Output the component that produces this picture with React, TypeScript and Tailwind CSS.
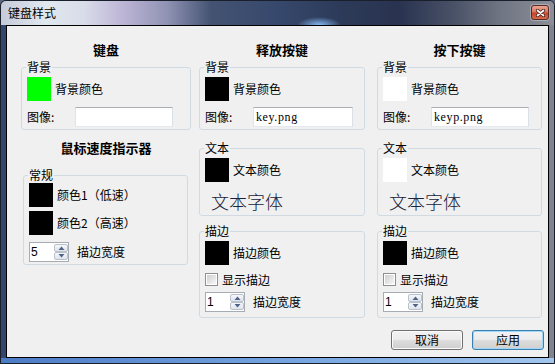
import React from "react";

function Group({
  title,
  className,
  children,
}: {
  title: string;
  className: string;
  children: React.ReactNode;
}) {
  return (
    <fieldset
      className={
        "border border-[#d0dae2] rounded-[3px] pl-[4px] pr-[4px] min-w-0 " +
        className
      }
    >
      <legend className="px-[1px] text-[12px] leading-[14px] text-black">{title}</legend>
      <div className="pl-[1px]">{children}</div>
    </fieldset>
  );
}

function ColorRow({
  swatch,
  label,
  className,
}: {
  swatch: string;
  label: string;
  className: string;
}) {
  return (
    <div className={"flex items-center h-[24px] " + className}>
      <div className={"w-[24px] h-[24px] shrink-0 " + swatch} />
      <span className="ml-[4px] text-[12px] leading-[14px] text-black whitespace-nowrap">{label}</span>
    </div>
  );
}

function ImageRow({ value, inputW }: { value: string; inputW: string }) {
  return (
    <div className="flex items-center h-[20px] mt-[6px]">
      <span className="w-[48px] shrink-0 text-[12px] leading-[14px] text-black">图像:</span>
      <div
        className={
          "h-[20px] bg-white border border-t-[#abadb3] border-l-[#e2e3ea] border-r-[#dbdfe6] border-b-[#e3e9ef] pl-[2px] flex items-center " +
          inputW
        }
      >
        <span className="font-['Liberation_Serif',serif] text-[12px] leading-[14px] tracking-[0.6px] text-black">
          {value}
        </span>
      </div>
    </div>
  );
}

function Spin({ v }: { v: string }) {
  return (
    <div className="flex w-[40px] h-[20px] shrink-0 border border-[#a7acb4] bg-white">
      <div className="flex-1 pl-[1px] text-[12px] leading-[18px] font-['Liberation_Sans',sans-serif] text-black">
        {v}
      </div>
      <div className="w-[14px] flex flex-col py-[1px]">
        <div className="flex-1 flex items-center justify-center border border-[#b9c1cc] rounded-[2px] bg-[linear-gradient(#f5f7fa,#dfe4ec)]">
          <svg width="7" height="4" viewBox="0 0 7 4">
            <path d="M0.5 4 L3.5 0.5 L6.5 4Z" fill="#4d6286" />
          </svg>
        </div>
        <div className="flex-1 flex items-center justify-center border border-[#b9c1cc] rounded-[2px] bg-[linear-gradient(#f5f7fa,#dfe4ec)]">
          <svg width="7" height="4" viewBox="0 0 7 4">
            <path d="M0.5 0 L3.5 3.5 L6.5 0Z" fill="#4d6286" />
          </svg>
        </div>
      </div>
    </div>
  );
}

function SpinRow({ v, className }: { v: string; className: string }) {
  return (
    <div className={"flex items-center h-[20px] " + className}>
      <Spin v={v} />
      <span className="ml-[8px] text-[12px] leading-[14px] text-black whitespace-nowrap">描边宽度</span>
    </div>
  );
}

function CheckRow() {
  return (
    <div className="flex items-center h-[13px] mt-[8px]">
      <div className="w-[13px] h-[13px] border border-[#8f8f8f] bg-white p-[1px] shrink-0">
        <div className="w-full h-full bg-[linear-gradient(135deg,#cfcfcf,#f7f7f7)]" />
      </div>
      <span className="ml-[4px] text-[12px] leading-[14px] text-black whitespace-nowrap">显示描边</span>
    </div>
  );
}

function KeyColumn({
  title,
  bg,
  text,
  file,
  inputW,
  className,
}: {
  title: string;
  bg: string;
  text: string;
  file: string;
  inputW: string;
  className: string;
}) {
  return (
    <div className={"flex flex-col " + className}>
      <div className="h-[16px] leading-[16px] text-center text-[13px] font-bold text-black">{title}</div>
      <Group title="背景" className="mt-[2px] pb-[2px]">
        <ColorRow swatch={bg} label="背景颜色" className="mt-[3px]" />
        <ImageRow value={file} inputW={inputW} />
      </Group>
      <Group title="文本" className="mt-[11px] pb-[2px]">
        <ColorRow swatch={text} label="文本颜色" className="mt-[3px]" />
        <div className="mt-[7px] h-[24px] pl-[6px] text-[18px] leading-[24px] font-light text-[#18223a] whitespace-nowrap">
          文本字体
        </div>
      </Group>
      <Group title="描边" className="mt-[8px] pb-[5px]">
        <ColorRow swatch="bg-black" label="描边颜色" className="mt-[3px]" />
        <CheckRow />
        <SpinRow v="1" className="mt-[6px]" />
      </Group>
    </div>
  );
}

export default function App() {
  return (
    <div className="w-[555px] h-[364px] bg-[#5b6478] font-['Noto_Sans_CJK_SC','Noto_Sans',sans-serif]">
      <div className="w-[555px] h-[364px] flex flex-col border border-[#1a1f2c] rounded-t-[6px] overflow-hidden bg-[linear-gradient(90deg,#33456c,#2f3d5e_45%,#4e5568_75%,#80848f)]">
        <div className="h-[24px] shrink-0 flex bg-[radial-gradient(ellipse_22px_8px_at_318px_24px,#86b8f0,transparent),linear-gradient(90deg,#c6cad8_0%,#e0e8f0_8%,#d9dce9_15%,#bdb5d6_22%,#9093b4_30%,#445372_38%,#36486c_50%,#2c3a58_62%,#293350_72%,#4a5267_82%,#6f7482_90%,#8c8f98_100%)]">
          <span className="ml-[7px] self-center text-[12px] leading-[16px] text-black">键盘样式</span>
          <button className="self-start mt-[4px] mr-[5px] ml-auto w-[18px] h-[15px] rounded-[3px] border border-[#5c2a22] bg-[linear-gradient(#eaa696_0%,#d9765f_45%,#c4452b_55%,#d66a4c_100%)] flex items-center justify-center shadow-[0_0_0_1px_rgba(255,255,255,0.3)]">
            <svg width="9" height="8" viewBox="0 0 9 8">
              <path d="M1.5 1.5 L7.5 6.5 M7.5 1.5 L1.5 6.5" stroke="#3a1a14" strokeWidth="3.2" strokeLinecap="round" />
              <path d="M1.5 1.5 L7.5 6.5 M7.5 1.5 L1.5 6.5" stroke="#ffffff" strokeWidth="1.7" strokeLinecap="round" />
            </svg>
          </button>
        </div>
        <div className="mx-[5px] h-[333px] shrink-0 border border-black bg-[#f0f0f0] flex flex-col">
          <div className="flex items-start pt-[16px] pl-[14px] pr-[6px]">
            <div className="w-[170px] shrink-0 flex flex-col">
              <div className="h-[16px] leading-[16px] text-center text-[13px] font-bold text-black">键盘</div>
              <Group title="背景" className="mt-[2px] pb-[2px]">
                <ColorRow swatch="bg-[#00ff00]" label="背景颜色" className="mt-[3px]" />
                <ImageRow value="" inputW="w-[98px]" />
              </Group>
              <div className="mt-[10px] h-[16px] leading-[16px] text-center text-[13px] font-bold text-black">
                鼠标速度指示器
              </div>
              <Group title="常规" className="mt-[12px] ml-[2px] mr-[3px] pb-[2px]">
                <ColorRow swatch="bg-black" label="颜色1（低速）" className="mt-[1px]" />
                <ColorRow swatch="bg-black" label="颜色2（高速）" className="mt-[4px]" />
                <SpinRow v="5" className="mt-[7px]" />
              </Group>
            </div>
            <KeyColumn
              title="释放按键"
              bg="bg-black"
              text="bg-black"
              file="key.png"
              inputW="w-[100px]"
              className="w-[166px] ml-[8px] shrink-0"
            />
            <KeyColumn
              title="按下按键"
              bg="bg-white"
              text="bg-white"
              file="keyp.png"
              inputW="w-[98px]"
              className="w-[165px] ml-[12px] shrink-0"
            />
          </div>
          <div className="flex justify-end mt-[12px] pr-[4px] gap-[9px]">
            <button className="w-[72px] h-[20px] rounded-[3px] border border-[#707070] bg-[linear-gradient(#f2f2f2_0%,#ebebeb_50%,#dddddd_50%,#cfcfcf_100%)] shadow-[inset_0_0_0_1px_#fbfbfb] flex items-center justify-center text-[12px] leading-[14px] text-black">
              取消
            </button>
            <button className="w-[72px] h-[20px] rounded-[3px] border border-[#3c7fb1] bg-[linear-gradient(#f2f2f2_0%,#ebebeb_50%,#dddddd_50%,#cfcfcf_100%)] shadow-[inset_0_0_0_1px_#9fd8f8] flex items-center justify-center text-[12px] leading-[14px] text-black">
              应用
            </button>
          </div>
        </div>
        <div className="h-[5px] shrink-0 bg-[linear-gradient(90deg,#4d7cc6,#74a3e0_50%,#a2c6ee)]" />
      </div>
    </div>
  );
}
